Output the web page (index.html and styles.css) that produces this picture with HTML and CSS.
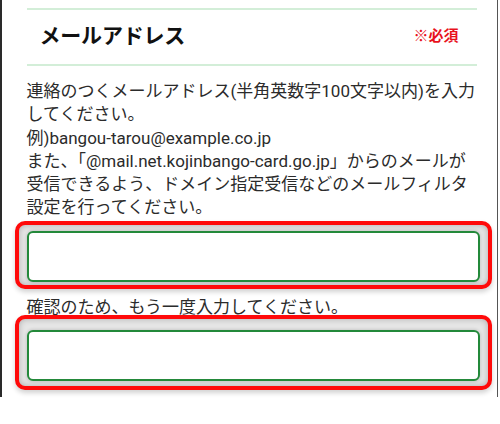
FILE: index.html
```html
<!DOCTYPE html>
<html lang="ja">
<head>
<meta charset="utf-8">
<link rel="stylesheet" href="styles.css">
</head>
<body>
<div class="frame">
  <div class="section">
    <div class="head">
      <h2 class="title">メールアドレス</h2>
      <span class="req">※必須</span>
    </div>
    <p class="desc">連絡のつくメールアドレス(半角英数字100文字以内)を入力<br>してください。<br>例)bangou-tarou@example.co.jp<br>また、「@mail.net.kojinbango-card.go.jp」からのメールが<br>受信できるよう、ドメイン指定受信などのメールフィルタ<br>設定を行ってください。</p>
    <div class="mark mark-first"><input class="field" type="email"></div>
    <p class="label">確認のため、もう一度入力してください。</p>
    <div class="mark mark-second"><input class="field" type="email"></div>
  </div>
</div>
</body>
</html>
```
FILE: styles.css
```css
html, body {
  margin: 0;
  padding: 0;
  background: #fff;
}
body {
  font-family: Roboto, "Noto Sans CJK JP", sans-serif;
  color: #2b2b2b;
  width: 500px;
  height: 424px;
  overflow: hidden;
}
.frame {
  box-sizing: border-box;
  width: 498px;
  height: 397px;
  border-left: 2.5px solid #2a2a2a;
  border-right: 1.5px solid #555;
  padding-top: 8px;
}
.section {
  padding-left: 12.5px;
}
.head {
  margin-left: 12px;
  width: 450px;
  height: 54px;
  border-top: 2px solid #d3eed8;
  border-bottom: 2px solid #d3eed8;
  display: flex;
  align-items: center;
  justify-content: space-between;
}
.title {
  margin: -2px 0 0 13px;
  font-size: 21px;
  font-weight: 700;
  color: #111;
  letter-spacing: -0.2px;
  line-height: 1;
}
.req {
  margin: -2px 18px 0 0;
  font-size: 15px;
  font-weight: 700;
  color: #e8111c;
  line-height: 1;
}
.desc {
  margin: 14px 0 0 12px;
  font-size: 17px;
  line-height: 23.3px;
  color: #2b2b2b;
  white-space: nowrap;
}
.mark {
  box-sizing: border-box;
  width: 477px;
  border: 4px solid #ff0a0a;
  border-radius: 10px;
  box-shadow: 0 3px 5px rgba(0,0,0,0.18), inset 0 0 6px rgba(0,0,0,0.25);
  background: #e6e6e6;
  display: flex;
}
.mark-first {
  margin-top: 1px;
  padding: 6px 8px 3px 8px;
}
.mark-second {
  margin-top: -1px;
  padding: 11px 8px 5px 8px;
}
.field {
  box-sizing: border-box;
  flex: 1;
  height: 51px;
  margin: 0;
  border: 2px solid #23893a;
  border-radius: 6px;
  background: #fff;
  outline: none;
  box-shadow: 0 0 3px 1px rgba(0,0,0,0.12);
}
.label {
  margin: 9px 0 0 12px;
  font-size: 17px;
  line-height: 18px;
  color: #2b2b2b;
}
```
